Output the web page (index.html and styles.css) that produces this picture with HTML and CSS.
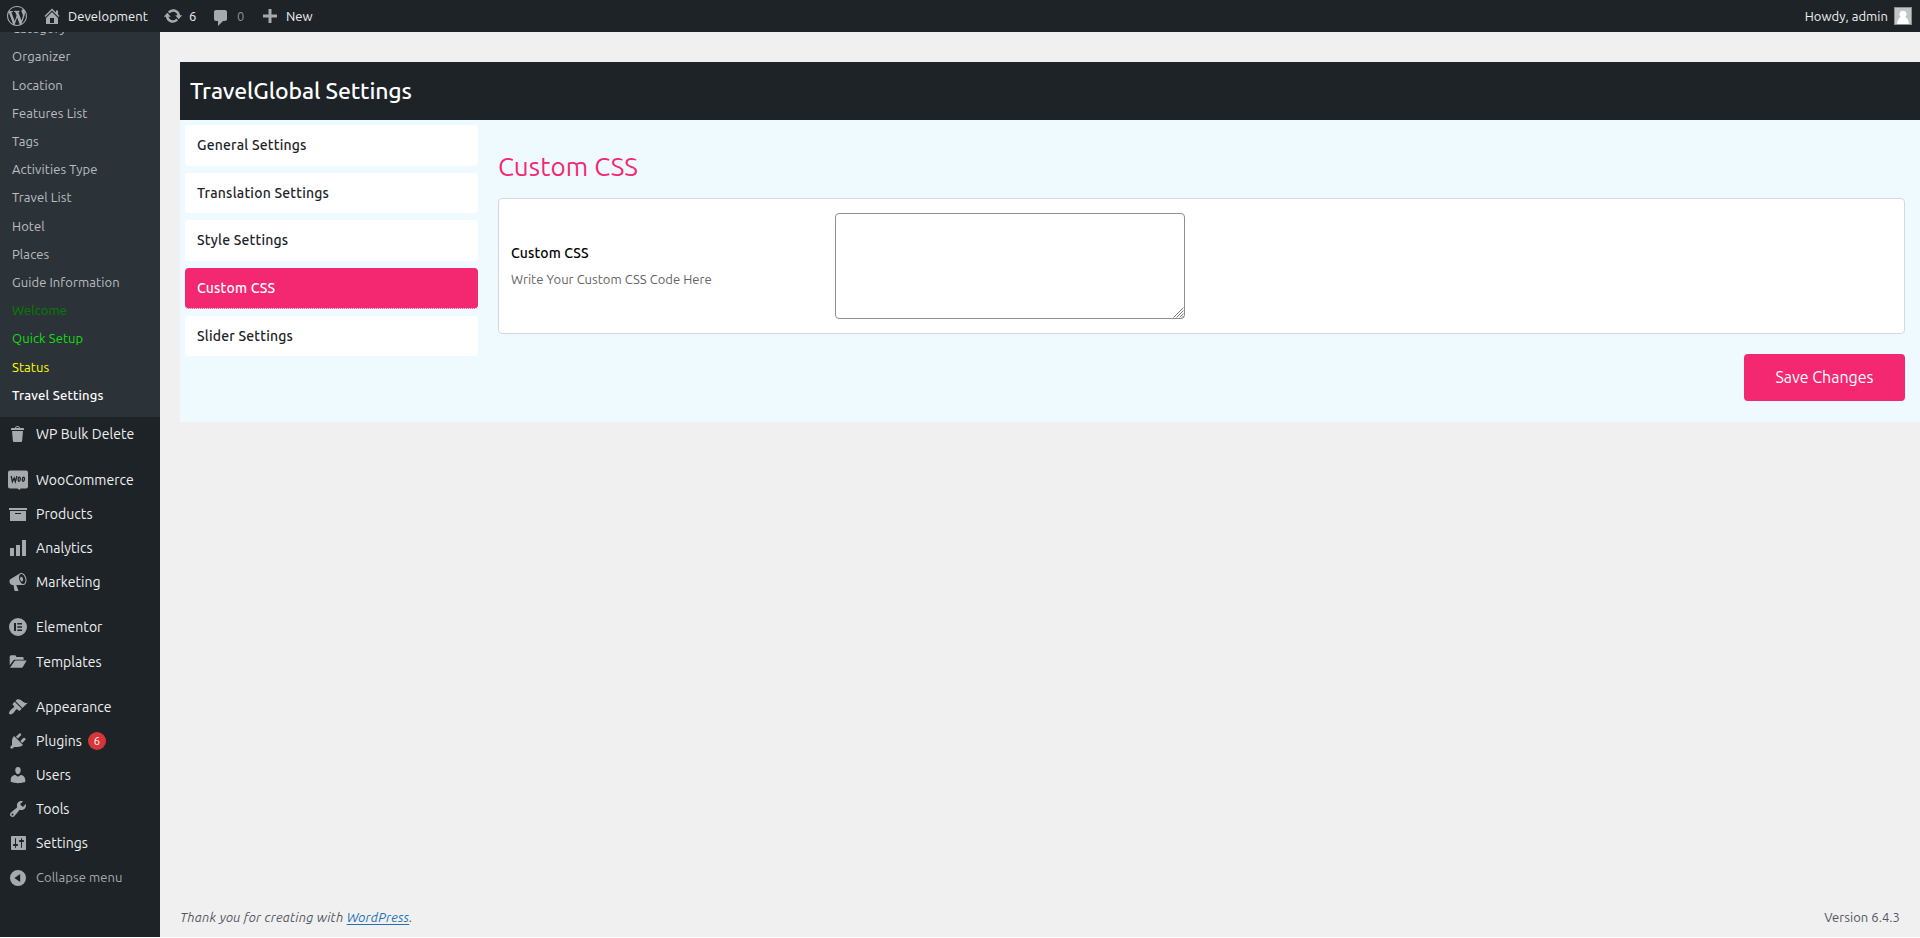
FILE: index.html
```html
<!DOCTYPE html>
<html lang="en">
<head>
<meta charset="utf-8">
<title>TravelGlobal Settings</title>
<link rel="stylesheet" href="styles.css">
</head>
<body>
<div class="page">
<header class="adminbar">
  <svg class="bar-logo" viewBox="0 0 20 20"><path d="M20 10c0-5.51-4.49-10-10-10C4.48 0 0 4.49 0 10c0 5.52 4.48 10 10 10 5.51 0 10-4.48 10-10zM7.78 15.37L4.37 6.22c.55-.02 1.17-.08 1.17-.08.5-.06.44-1.13-.06-1.11 0 0-1.45.11-2.37.11-.18 0-.37 0-.58-.01C4.12 2.69 6.87 1.11 10 1.11c2.33 0 4.45.87 6.05 2.34-.68-.11-1.65.39-1.65 1.58 0 .74.45 1.36.9 2.1.35.61.55 1.36.55 2.46 0 1.49-1.4 5-1.4 5l-3.03-8.37c.54-.02.82-.17.82-.17.5-.05.44-1.25-.06-1.22 0 0-1.44.12-2.38.12-.87 0-2.33-.12-2.33-.12-.5-.03-.56 1.2-.06 1.22l.92.08 1.26 3.41zM17.41 10c.24-.64.74-1.87.43-4.25.7 1.29 1.05 2.71 1.05 4.25 0 3.29-1.73 6.24-4.4 7.78.97-2.59 1.94-5.2 2.92-7.78zM6.1 18.09C3.12 16.65 1.11 13.53 1.11 10c0-1.3.23-2.48.72-3.59C3.25 10.3 4.67 14.2 6.1 18.09zm4.03-6.63l2.58 6.98c-.86.29-1.76.45-2.71.45-.79 0-1.57-.11-2.29-.33.81-2.38 1.62-4.74 2.42-7.1z"/></svg>
  <div class="bar-item bar-site"><svg viewBox="0 0 20 20"><path d="M16 8.5l1.53 1.53-1.06 1.06L10 4.6l-6.47 6.49-1.06-1.06L10 2.5l4 4v-2h2v4zm-6-2.46l6 5.99V18H4v-5.97zM12 17v-5H8v5h4z"/></svg><span>Development</span></div>
  <div class="bar-item bar-updates"><svg viewBox="0 0 20 20"><path d="M10.2 3.28c3.53 0 6.43 2.61 6.92 6h2.08l-3.5 4-3.5-4h2.32c-.45-1.97-2.21-3.45-4.32-3.45-1.45 0-2.73.71-3.54 1.78L4.95 5.66C6.23 4.2 8.11 3.28 10.2 3.28zm-.4 13.44c-3.52 0-6.43-2.61-6.92-6H.8l3.5-4c1.17 1.33 2.33 2.67 3.5 4H5.48c.45 1.97 2.21 3.45 4.32 3.45 1.45 0 2.73-.71 3.54-1.78l1.71 1.95c-1.28 1.46-3.15 2.38-5.25 2.38z"/></svg><span>6</span></div>
  <div class="bar-item bar-comments"><svg viewBox="0 0 20 20"><path d="M5 2h9c1.1 0 2 .9 2 2v7c0 1.1-.9 2-2 2h-2l-5 5v-5H5c-1.1 0-2-.9-2-2V4c0-1.1.9-2 2-2z"/></svg><span>0</span></div>
  <div class="bar-item bar-new"><svg viewBox="0 0 20 20"><path d="M17 8.500v3h-5.500v5.500h-3v-5.500H3v-3h5.500V3h3v5.500z"/></svg><span>New</span></div>
  <div class="bar-account"><span>Howdy, admin</span>
    <svg class="avatar" viewBox="0 0 18 18"><rect class="avatar-frame" width="18" height="18"/><rect class="avatar-bg" x="1" y="1" width="16" height="16"/><path class="avatar-person" d="M9 3.700a3.600 3.600 0 0 1 2.300 6.400c2 .9 3.200 3 3.700 6.900H3c.5-3.900 1.700-6 3.700-6.900A3.600 3.600 0 0 1 9 3.700z"/></svg>
  </div>
</header>
<div class="body">
<nav class="sidebar">
  <ul class="submenu">
    <li>Category</li>
    <li>Organizer</li>
    <li>Location</li>
    <li>Features List</li>
    <li>Tags</li>
    <li>Activities Type</li>
    <li>Travel List</li>
    <li>Hotel</li>
    <li>Places</li>
    <li>Guide Information</li>
    <li class="sub-welcome">Welcome</li>
    <li class="sub-quick">Quick Setup</li>
    <li class="sub-status">Status</li>
    <li class="sub-current">Travel Settings</li>
  </ul>
  <ul class="menu">
    <li><svg viewBox="0 0 20 20"><path d="M12 4h3c.6 0 1 .4 1 1v1H3V5c0-.6.5-1 1-1h3c.2-1.100 1.300-2 2.500-2s2.300.9 2.500 2zM8 4h3c-.2-.6-.9-1-1.500-1S8.200 3.400 8 4zM4 7h11l-.9 10.100c0 .5-.5.9-1 .9H5.900c-.5 0-.9-.4-1-.9L4 7z"/></svg><span>WP Bulk Delete</span></li>
    <li class="sep"><svg viewBox="0 0 20 20"><path d="M2 .5h16a2 2 0 0 1 2 2v14a2 2 0 0 1-2 2h-5.500l-.6 1.500-2.600-1.500H2a2 2 0 0 1-2-2v-14a2 2 0 0 1 2-2z"/><path class="cut" d="M3.200 6l1.200 5.800 1.800-3.800 1.100 3.800 1.700-5.800M11.300 7.200c1.500 0 1.100 4.200-.2 4.200s-1.200-4.200.2-4.200zM15.500 7.200c1.500 0 1.100 4.200-.2 4.200s-1.200-4.200.2-4.200z"/></svg><span>WooCommerce</span></li>
    <li><svg viewBox="0 0 20 20"><path d="M19 4v2H1V4h18zM2 7h16v10H2V7zm11 3V9H7v1h6z"/></svg><span>Products</span></li>
    <li><svg viewBox="0 0 20 20"><path d="M18 18V2h-4v16h4zm-6 0V7H8v11h4zm-6 0v-8H2v8h4z"/></svg><span>Analytics</span></li>
    <li><svg viewBox="0 0 20 20"><path d="M18.150 5.940c.46 1.620.38 3.220-.02 4.480-.42 1.280-1.260 2.180-2.300 2.480-.16.06-.26.06-.4.06-.06.02-.12.02-.18.02-.06.02-.14.02-.22.02h-6.800l2.220 5.500c.02.14-.06.26-.14.34-.08.1-.24.16-.34.16H6.950c-.1 0-.26-.06-.34-.16-.08-.08-.16-.2-.14-.34l-1-5.500H4.250l-.02-.02c-.5.06-1.080-.18-1.540-.62s-.88-1.080-1.060-1.880c-.24-.8-.2-1.560-.02-2.200.18-.62.58-1.080 1.060-1.300l.02-.02 9-5.400c.1-.06.18-.1.24-.16.06-.04.14-.08.24-.12.16-.08.28-.12.5-.18 1.040-.3 2.240.1 3.220.98s1.840 2.240 2.260 3.860zm-2.580 5.980h-.02c.4-.1.74-.34 1.040-.7.58-.7.86-1.760.86-3.040 0-.64-.1-1.300-.28-1.980-.34-1.360-1.020-2.500-1.780-3.240s-1.680-1.100-2.460-.88c-.82.22-1.400.96-1.700 2-.32 1.040-.28 2.360.06 3.720.38 1.360 1 2.500 1.800 3.240.78.74 1.620 1.100 2.480.88zm-2.540-7.080c.22-.04.42-.02.62.04.38.16.76.48 1.020 1s.42 1.200.42 1.780c0 .3-.04.56-.12.8-.18.48-.44.84-.86.94-.34.1-.8-.06-1.140-.4s-.64-.86-.78-1.500c-.18-.62-.12-1.240.02-1.720s.48-.84.82-.94z"/></svg><span>Marketing</span></li>
    <li class="sep"><svg viewBox="0 0 20 20"><path fill-rule="evenodd" d="M10 1a9 9 0 1 0 0 18 9 9 0 0 0 0-18zM6 6h2v8H6zM9.300 6H14v1.600H9.300zM9.300 9.200H14v1.600H9.300zM9.300 12.400H14V14H9.300z"/></svg><span>Elementor</span></li>
    <li><svg viewBox="0 0 20 20"><path d="M1.700 13.200V5.100c0-1.100.5-1.900 1.600-1.900h3.600c1 0 1.400.8 1.400 1.900h5.900c1 0 1.500.6 1.500 1.500v1.100H7.200c-1 0-1.500.3-2.100 1z"/><path d="M18.700 8.600l-3.900 6.300c-.4.6-.9.8-1.600.8H2l4.300-6.300c.4-.6.9-.8 1.500-.8z"/></svg><span>Templates</span></li>
    <li class="sep"><svg viewBox="0 0 20 20"><path d="M14.480 11.060L7.410 3.990l1.500-1.500c.5-.56 2.300-.47 3.510.32 1.210.8 1.430 1.280 2.910 2.100 1.180.64 2.450 1.260 4.450.85zm-.71.71L6.700 4.700 4.930 6.470c-.39.39-.39 1.020 0 1.410l1.060 1.060c.39.39.39 1.030 0 1.420-.6.6-1.430 1.110-2.210 1.690-.35.26-.7.53-1.010.84C1.430 14.230.4 16.080 1.400 17.070c.99 1 2.840-.03 4.180-1.360.31-.31.58-.66.85-1.020.57-.78 1.080-1.610 1.690-2.210.39-.39 1.020-.39 1.410 0l1.060 1.060c.39.39 1.020.39 1.410 0z"/></svg><span>Appearance</span></li>
    <li><svg viewBox="0 0 20 20"><path d="M13.110 4.360L9.870 7.600 8 5.730l3.240-3.240c.35-.34 1.050-.2 1.560.32.52.51.66 1.210.31 1.550zm-8 1.770l.91-1.120 9.010 9.010-1.190.84c-.71.71-2.630 1.160-3.820 1.160H6.140L4.900 17.260c-.59.59-1.540.59-2.120 0-.59-.58-.59-1.530 0-2.120l1.240-1.240v-3.880c0-1.130.4-3.190 1.090-3.890zm7.260 3.970l3.240-3.240c.34-.35 1.040-.21 1.550.31.52.51.66 1.210.31 1.550l-3.240 3.250z"/></svg><span>Plugins</span><b class="badge">6</b></li>
    <li><svg viewBox="0 0 20 20"><path d="M10 9.250c-2.270 0-2.730-3.440-2.730-3.440C7 4.020 7.820 2 9.970 2c2.160 0 2.980 2.020 2.710 3.810 0 0-.41 3.440-2.680 3.440zm0 2.570L12.720 10c2.390 0 4.520 2.330 4.520 4.530v2.490s-3.650 1.130-7.240 1.130c-3.650 0-7.240-1.130-7.240-1.130v-2.490c0-2.250 1.940-4.480 4.470-4.480z"/></svg><span>Users</span></li>
    <li><svg viewBox="0 0 20 20"><path d="M16.680 9.770c-1.340 1.340-3.300 1.670-4.950.99l-5.410 6.520c-.99.99-2.590.99-3.580 0s-.99-2.590 0-3.570l6.520-5.420c-.68-1.650-.35-3.610.99-4.950 1.280-1.280 3.120-1.620 4.720-1.060l-2.890 2.890 2.820 2.820 2.860-2.870c.53 1.580.18 3.390-1.080 4.650zM3.810 16.210c.4.39 1.040.39 1.430 0 .4-.4.4-1.040 0-1.430-.39-.4-1.030-.4-1.430 0-.39.39-.39 1.030 0 1.430z"/></svg><span>Tools</span></li>
    <li><svg viewBox="0 0 20 20"><path d="M18 16V4c0-.55-.45-1-1-1H4c-.55 0-1 .45-1 1v12c0 .55.45 1 1 1h13c.55 0 1-.45 1-1zM8 11h1c.55 0 1 .45 1 1s-.45 1-1 1H8v1.500c0 .28-.22.5-.5.5s-.5-.22-.5-.5V13H6c-.55 0-1-.45-1-1s.45-1 1-1h1V5.500c0-.28.22-.5.5-.5s.5.22.5.5V11zm5-2h-1c-.55 0-1-.45-1-1s.45-1 1-1h1V5.500c0-.28.22-.5.5-.5s.5.22.5.5V7h1c.55 0 1 .45 1 1s-.45 1-1 1h-1v5.500c0 .28-.22.5-.5.5s-.5-.22-.5-.5V9z"/></svg><span>Settings</span></li>
    <li class="collapse"><svg viewBox="0 0 20 20"><path fill-rule="evenodd" d="M10 2a8 8 0 1 0 0 16 8 8 0 0 0 0-16zM12.200 6v8L6.400 10z"/></svg><span>Collapse menu</span></li>
  </ul>
</nav>
<main class="content">
  <h1 class="title">TravelGlobal Settings</h1>
  <div class="panel">
    <ul class="tabs">
      <li>General Settings</li>
      <li>Translation Settings</li>
      <li>Style Settings</li>
      <li class="active">Custom CSS</li>
      <li>Slider Settings</li>
    </ul>
    <section class="form">
      <h2>Custom CSS</h2>
      <div class="card">
        <div class="label"><strong>Custom CSS</strong><span>Write Your Custom CSS Code Here</span></div>
        <div class="field">
          <textarea class="code"></textarea>
          <svg class="grip" viewBox="0 0 11 11"><path d="M.5 10.500l10-10M3.500 10.500l7-7M6.500 10.500l4-4M9 10.500l1.500-1.500"/></svg>
        </div>
      </div>
      <button class="save">Save Changes</button>
    </section>
  </div>
  <footer class="footer"><em>Thank you for creating with <a>WordPress</a>.</em><span class="version">Version 6.4.3</span></footer>
</main>
</div>
</div>
</body>
</html>
```
FILE: styles.css
```css
* { box-sizing: border-box; }
body { margin: 0; background: #fff; font-family: Ubuntu, "Noto Sans", sans-serif; font-size: 13px; color: #3c434a; overflow: hidden; }
ul { list-style: none; margin: 0; padding: 0; }
.page { height: 937px; display: flex; flex-direction: column; background: #f0f0f1; overflow: hidden; }

.adminbar { height: 32px; flex: none; display: flex; align-items: center; background: #1d2327; color: #f0f0f1; padding: 0 8px 0 7px; letter-spacing: .05px; }
.adminbar svg { width: 20px; height: 20px; flex: none; fill: #a7aaad; }
.bar-item { display: flex; align-items: center; gap: 6px; }
.bar-site { margin-left: 15px; width: 121px; }
.bar-updates { width: 48px; }
.bar-comments { width: 49px; color: #8c9196; }
.adminbar .bar-comments svg { margin-top: 4px; }
.adminbar .avatar { width: 18px; height: 18px; }
.bar-account { margin-left: auto; display: flex; align-items: center; gap: 6px; }
.avatar .avatar-frame { fill: #8c8f94; }
.avatar .avatar-bg { fill: #c4c4c4; }
.avatar .avatar-person { fill: #fff; }

.body { flex: 1; display: flex; min-height: 0; }
.sidebar { width: 160px; flex: none; background: #1d2327; color: #f0f0f1; display: flex; flex-direction: column; }
.submenu { height: 385px; flex: none; overflow: hidden; display: flex; flex-direction: column; justify-content: flex-end; padding-bottom: 8.100px; background: #2c3338; color: #bbbec1; letter-spacing: .08px; }
.submenu li { flex: none; height: 28.200px; padding: 0 12px; line-height: 28.200px; white-space: nowrap; }
.submenu .sub-welcome { color: #008000; }
.submenu .sub-quick { color: #12de12; }
.submenu .sub-status { color: #ff0; }
.submenu .sub-current { color: #fff; font-weight: 500; letter-spacing: .2px; }
.menu { padding-top: .3px; }
.menu li { height: 34.200px; display: flex; align-items: center; padding-left: 8px; font-size: 14px; letter-spacing: .05px; white-space: nowrap; }
.menu li.sep { margin-top: 11px; }
.menu svg { width: 20px; height: 20px; margin-right: 8px; fill: #a7aaad; }
.menu .cut { fill: none; stroke: #1d2327; stroke-width: 1.300; }
.badge { width: 18px; height: 18px; margin-left: 6px; border-radius: 9px; background: #d63638; color: #fff; font-size: 11px; font-weight: 400; line-height: 18px; text-align: center; }
.menu .collapse { color: #a7aaad; font-size: 13px; }
.menu .collapse span { padding-bottom: 2px; }

.content { flex: 1; min-width: 0; padding: 30px 0 0 20px; display: flex; flex-direction: column; }
.title { margin: 0; height: 58px; padding-left: 10px; background: #1d2327; color: #fff; font-size: 23px; font-weight: 500; letter-spacing: -.12px; line-height: 57px; }
.panel { height: 302px; background: #eefaff; display: flex; padding: 5px 15px 0 5px; }
.tabs { width: 293px; flex: none; margin-right: 20px; display: flex; flex-direction: column; gap: 7.070px; }
.tabs li { height: 40.600px; padding: 0 12px; border-bottom: 1px dotted #fff; border-radius: 4px; background: #fff; color: #1d2327; font-size: 14px; font-weight: 500; letter-spacing: .2px; line-height: 40.600px; }
.tabs .active { background: #f32871; color: #fff; }
.form { flex: 1; display: flex; flex-direction: column; }
.form h2 { margin: 25px 0 14px; color: #f32871; font-size: 26px; font-weight: 400; letter-spacing: .1px; line-height: 34px; }
.card { height: 136px; border: 1px solid #d5d9dc; border-radius: 4px; background: #fff; display: flex; align-items: center; padding: 0 12px; }
.label { width: 324px; display: flex; flex-direction: column; gap: 7px; padding-bottom: 1px; color: #646464; }
.label strong { color: #000; font-size: 14px; font-weight: 500; letter-spacing: .15px; line-height: 19px; }
.label span { letter-spacing: .05px; line-height: 18px; }
.field { position: relative; width: 350px; height: 106px; }
.code { display: block; width: 350px; height: 106px; margin: 0; border: 1px solid #8c8f94; border-radius: 4px; background: #fff; resize: none; }
.grip { position: absolute; right: 1px; bottom: 1px; width: 11px; height: 11px; fill: none; stroke: #777; stroke-width: 1; }
.save { align-self: flex-end; width: 161px; height: 47px; margin-top: 20px; border: 0; border-radius: 4px; background: #f32871; color: #fff; font: 16px Ubuntu, "Noto Sans", sans-serif; padding: 0 0 2px; }
.footer { margin-top: auto; height: 40px; display: flex; justify-content: space-between; align-items: center; padding-right: 20px; color: #50575e; }
.footer em { letter-spacing: .23px; }
.footer .version { letter-spacing: .05px; }
.footer a { color: #2271b1; text-decoration: underline; text-underline-offset: 2px; }
```
